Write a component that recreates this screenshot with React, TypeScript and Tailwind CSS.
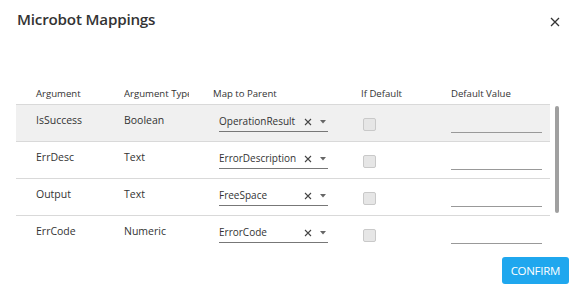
import React from 'react';

const rows = [
  { arg: 'IsSuccess', type: 'Boolean', parent: 'OperationResult' },
  { arg: 'ErrDesc', type: 'Text', parent: 'ErrorDescription' },
  { arg: 'Output', type: 'Text', parent: 'FreeSpace' },
  { arg: 'ErrCode', type: 'Numeric', parent: 'ErrorCode' },
];

export default function App() {
  return (
    <div
      className="w-[582px] h-[300px] bg-white text-[#333] overflow-hidden flex flex-col"
      style={{ fontFamily: '"Open Sans", "Noto Sans", sans-serif' }}
    >
      {/* Title bar */}
      <div className="flex justify-between items-center pl-[17px] pr-[22px] pt-[7px] h-[32px]">
        <h2 className="text-[15.2px] font-semibold tracking-[-0.2px]">Microbot Mappings</h2>
        <svg width="10" height="10" viewBox="0 0 10 10" className="mt-[5px]">
          <path d="M1 1 L9 9 M9 1 L1 9" stroke="#333" strokeWidth="1.3" />
        </svg>
      </div>

      {/* Table */}
      <div className="mt-[52px] pl-[16px] flex">
        <div className="w-[534px]">
          <div className="flex items-center h-[21px] border-b border-[#d9d9d9] text-[9.6px] font-medium pl-[20px]">
            <div className="w-[88px]">Argument</div>
            <div className="w-[89px]">
              <div className="w-[65px] overflow-hidden whitespace-nowrap">Argument Type</div>
            </div>
            <div className="w-[148px]">Map to Parent</div>
            <div className="w-[90px]">If Default</div>
            <div>Default Value</div>
          </div>

          <div className="w-[534px] h-[147px] overflow-hidden">
            {rows.map((r, i) => (
              <div
                key={r.arg}
                className={`flex h-[37px] border-b border-[#d9d9d9] pl-[20px] text-[10.5px] ${i === 0 ? 'bg-[#f0f0f0]' : ''}`}
              >
                <div className="w-[88px] pt-[8px]">{r.arg}</div>
                <div className="w-[89px] pt-[8px]">{r.type}</div>
                <div className="w-[148px] pl-[6px] pt-[7px]">
                  <div className="w-[109px] h-[20px] border-b border-[#777] flex items-center text-[10px]">
                    <span className="flex-1 whitespace-nowrap">{r.parent}</span>
                    <svg width="8" height="8" viewBox="0 0 8 8" className="mr-[8px]">
                      <path d="M1 1 L7 7 M7 1 L1 7" stroke="#444" strokeWidth="1.1" />
                    </svg>
                    <svg width="6" height="4" viewBox="0 0 6 4" className="mr-[2px]">
                      <path d="M0 0 L6 0 L3 3.5 Z" fill="#666" />
                    </svg>
                  </div>
                </div>
                <div className="w-[90px] pl-[2px] pt-[13px]">
                  <div className="w-[13px] h-[13px] bg-[#e6e6e6] border border-[#c9c9c9] rounded-[2px]" />
                </div>
                <div className="pt-[27px]">
                  <div className="w-[91px] border-b border-[#999]" />
                </div>
              </div>
            ))}
          </div>
        </div>
        {/* scrollbar */}
        <div className="ml-[5px] mt-[22px] w-[4px] h-[107px] rounded-full bg-[#a0a0a0]" />
      </div>

      {/* Footer */}
      <div className="flex justify-end pr-[13px] mt-[5px]">
        <button className="h-[27px] px-[9px] rounded-[3px] bg-[#1fa7ee] text-white text-[11.5px] tracking-[-0.3px]">
          CONFIRM
        </button>
      </div>
    </div>
  );
}
